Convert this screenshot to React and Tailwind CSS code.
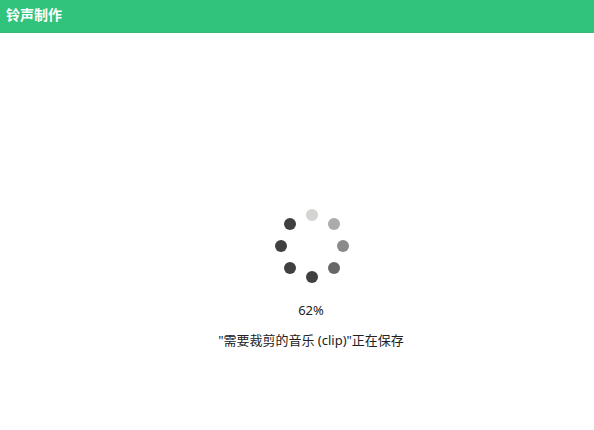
const dots = [
  { cx: 40, cy: 9, fill: '#d4d4d2' },
  { cx: 62, cy: 18, fill: '#ababab' },
  { cx: 71, cy: 40, fill: '#8a8a8a' },
  { cx: 62, cy: 62, fill: '#686868' },
  { cx: 40, cy: 71, fill: '#404040' },
  { cx: 18, cy: 62, fill: '#404040' },
  { cx: 9, cy: 40, fill: '#404040' },
  { cx: 18, cy: 18, fill: '#404040' },
];

export default function App() {
  return (
    <div className="w-[594px] h-[430px] bg-white flex flex-col font-['Noto_Sans','Noto_Sans_CJK_SC',sans-serif]">
      <div className="h-[33px] bg-[#31c27c] border-b border-[#3bb878] flex items-center px-[6px] pb-[3px]">
        <span className="text-[14px] font-bold text-white">铃声制作</span>
      </div>
      <div className="flex flex-col items-center pt-[173px] pl-[30px]">
        <svg width="80" height="80" viewBox="0 0 80 80">
          {dots.map((d, i) => (
            <circle key={i} cx={d.cx} cy={d.cy} r="6" fill={d.fill} />
          ))}
        </svg>
        <div className="mt-[16px] pr-[2px] text-[13px] leading-[16px] text-[#222]">62%</div>
        <div className="mt-[14px] pr-[2px] text-[13px] leading-[16px] text-[#222]">"需要裁剪的音乐 (clip)"正在保存</div>
      </div>
    </div>
  );
}
